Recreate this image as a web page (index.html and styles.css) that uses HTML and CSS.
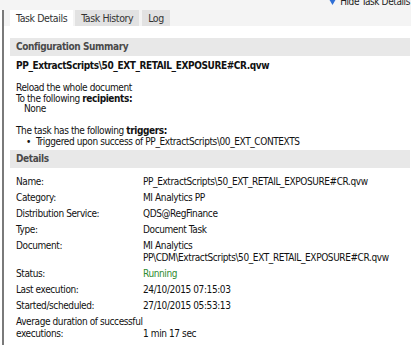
FILE: index.html
```html
<!DOCTYPE html>
<html lang="en">

<head>
    <meta charset="UTF-8">
    <meta name="viewport" content="width=device-width, initial-scale=1.0">
    <title>Task Details</title>
    <link rel="stylesheet" href="styles.css">
</head>

<body>
    <div class="top-bar">
        <a class="hide-link" href="#">
            <svg width="7" height="6" viewBox="0 0 7 6"><path d="M0 0 L7 0 L3.5 6 Z" fill="#2f6fd6" /></svg>
            Hide Task Details
        </a>
    </div>

    <div class="frame">
        <div class="tabs">
            <div class="tab active">Task Details</div>
            <div class="tab">Task History</div>
            <div class="tab">Log</div>
        </div>

        <div class="panel">
            <div class="section-head">Configuration Summary</div>
            <div class="summary">
                <div class="doc-title">PP_ExtractScripts\50_EXT_RETAIL_EXPOSURE#CR.qvw</div>
                <div class="line">Reload the whole document</div>
                <div class="line">To the following <b>recipients:</b></div>
                <div class="line indent">None</div>
                <div class="line gap">The task has the following <b>triggers:</b></div>
                <ul class="triggers">
                    <li>Triggered upon success of PP_ExtractScripts\00_EXT_CONTEXTS</li>
                </ul>
            </div>

            <div class="section-head">Details</div>
            <div class="details">
                <div class="row"><div class="label">Name:</div><div class="value">PP_ExtractScripts\50_EXT_RETAIL_EXPOSURE#CR.qvw</div></div>
                <div class="row"><div class="label">Category:</div><div class="value">MI Analytics PP</div></div>
                <div class="row"><div class="label">Distribution Service:</div><div class="value">QDS@RegFinance</div></div>
                <div class="row"><div class="label">Type:</div><div class="value">Document Task</div></div>
                <div class="row"><div class="label">Document:</div><div class="value">MI Analytics<br>PP\CDM\ExtractScripts\50_EXT_RETAIL_EXPOSURE#CR.qvw</div></div>
                <div class="row"><div class="label">Status:</div><div class="value running">Running</div></div>
                <div class="row"><div class="label">Last execution:</div><div class="value">24/10/2015 07:15:03</div></div>
                <div class="row"><div class="label">Started/scheduled:</div><div class="value">27/10/2015 05:53:13</div></div>
                <div class="row bottom"><div class="label">Average duration of successful<br>executions:</div><div class="value">1 min 17 sec</div></div>
            </div>
        </div>
    </div>
</body>

</html>
```

FILE: styles.css
```css
* {
    box-sizing: border-box;
    margin: 0;
    padding: 0;
}

body {
    font-family: "DejaVu Sans Condensed", "DejaVu Sans", sans-serif;
    font-size: 10px;
    letter-spacing: -0.4px;
    color: #111;
    background-color: #fff;
    width: 411px;
    height: 345px;
    overflow: hidden;
}

.top-bar {
    background-color: #f4f4f4;
    height: 10px;
    display: flex;
    justify-content: flex-end;
    align-items: flex-end;
    overflow: hidden;
}

.hide-link {
    display: flex;
    align-items: center;
    gap: 4px;
    color: #222;
    text-decoration: none;
    margin-bottom: 3px;
    margin-right: 1px;
    white-space: nowrap;
}

.frame {
    border-left: 2px solid #7a7a7a;
    margin-left: 2px;
    min-height: 335px;
}

.tabs {
    background-color: #f4f4f4;
    display: flex;
    gap: 2px;
    padding-left: 6px;
    height: 16px;
}

.tab {
    background-color: #e2e2e2;
    color: #333;
    padding: 0 6px;
    line-height: 16px;
    font-size: 10.5px;
}

.tab:last-child {
    margin-left: 1px;
}

.tab.active {
    background-color: #fff;
}

.panel {
    padding: 12px 1px 0 6px;
}

.section-head {
    background-color: #e8e8e8;
    color: #4a4a4a;
    font-weight: bold;
    font-size: 10px;
    height: 18px;
    line-height: 18px;
    padding-left: 6px;
}

.summary {
    padding: 4px 6px 3px 6px;
}

.doc-title {
    font-weight: bold;
    font-size: 10px;
    line-height: 12px;
    margin-bottom: 11px;
}

.line {
    line-height: 10.5px;
}

.indent {
    padding-left: 8px;
}

.gap {
    margin-top: 11px;
}

.triggers {
    list-style: none;
    padding-left: 10px;
    line-height: 11px;
}

.triggers li::before {
    content: "\2022";
    margin-right: 5px;
}

.details {
    padding: 8px 6px 0 6px;
}

.row {
    display: flex;
    line-height: 12px;
    margin-bottom: 4px;
}

.label {
    width: 127px;
    flex-shrink: 0;
    padding-right: 2px;
    white-space: nowrap;
}

.value.running {
    color: #2e8b2e;
}

.row.bottom .value {
    align-self: flex-end;
}
```
